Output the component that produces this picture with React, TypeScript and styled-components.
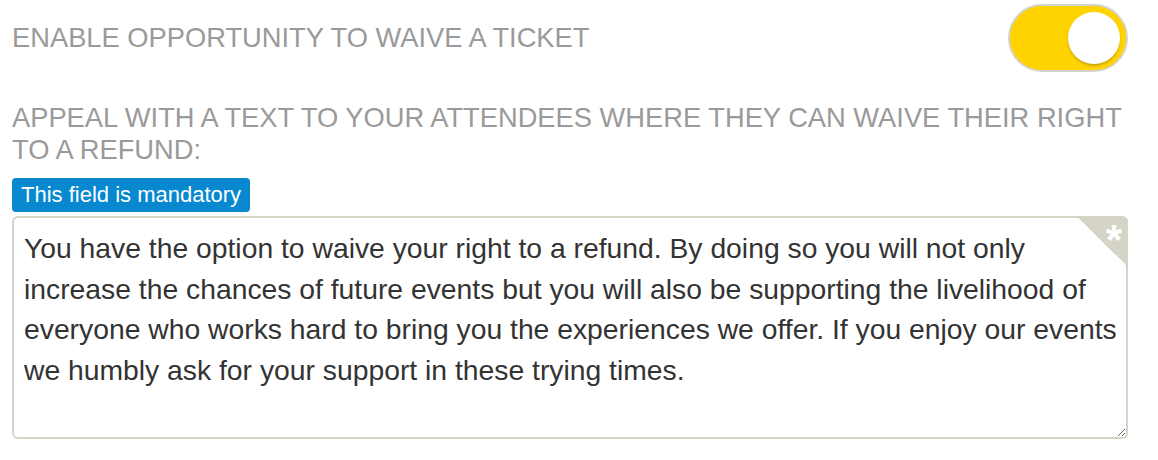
import React, { useState } from "react";
import styled, { createGlobalStyle } from "styled-components";

const GlobalStyle = createGlobalStyle`
  body {
    margin: 0;
    background: #ffffff;
    font-family: "Liberation Sans", Arial, sans-serif;
  }
`;

const Page = styled.div`
  width: 1116px;
  padding: 4px 0 0 12px;
`;

const SettingRow = styled.div`
  display: flex;
  align-items: center;
  justify-content: space-between;
  height: 68px;
`;

const Heading = styled.h3`
  margin: 0;
  font-size: 27.3px;
  font-weight: 400;
  line-height: 32px;
  color: #9a9a9a;
  text-transform: uppercase;
`;

const AppealHeading = styled(Heading)`
  margin-top: 30px;
`;

const Track = styled.button<{ $on: boolean }>`
  width: 120px;
  height: 68px;
  padding: 0;
  border: 2px solid #d5d4cb;
  border-radius: 34px;
  background: ${(p) => (p.$on ? "#ffd300" : "#eeeeee")};
  display: flex;
  align-items: center;
  justify-content: ${(p) => (p.$on ? "flex-end" : "flex-start")};
  cursor: pointer;
`;

const Knob = styled.span`
  width: 52px;
  height: 52px;
  margin: 0 6px;
  border-radius: 50%;
  background: #ffffff;
  box-shadow: 0 2px 2px rgba(120, 90, 0, 0.35);
`;

const Badge = styled.span`
  display: inline-block;
  margin-top: 12px;
  padding: 0 9px;
  height: 34px;
  line-height: 34px;
  border-radius: 4px;
  background: #0788cf;
  color: #ffffff;
  font-size: 22px;
`;

const FieldWrap = styled.div`
  position: relative;
  margin-top: 4px;
`;

const TextArea = styled.textarea`
  display: block;
  box-sizing: border-box;
  width: 1116px;
  height: 223px;
  padding: 10px 8px 10px 10px;
  border: 2px solid #d5d4c6;
  border-radius: 6px;
  font-family: "Liberation Sans", Arial, sans-serif;
  font-size: 28.3px;
  line-height: 40.5px;
  color: #333333;
  resize: vertical;
  outline: none;
`;

const RequiredCorner = styled.div`
  position: absolute;
  top: 0;
  right: 0;
  width: 51px;
  height: 51px;
  border-top-right-radius: 6px;
  background: linear-gradient(to top right, transparent 50%, #d5d4c6 50%);
  pointer-events: none;
`;

const Asterisk = styled.span`
  position: absolute;
  top: 3px;
  right: 6px;
  color: #ffffff;
  font-size: 42px;
  font-weight: 700;
  line-height: 42px;
`;

const appealText =
  "You have the option to waive your right to a refund. By doing so you will not only increase the chances of future events but you will also be supporting the livelihood of everyone who works hard to bring you the experiences we offer. If you enjoy our events we humbly ask for your support in these trying times.";

export default function App() {
  const [enabled, setEnabled] = useState(true);

  return (
    <Page>
      <GlobalStyle />
      <SettingRow>
        <Heading>Enable opportunity to waive a ticket</Heading>
        <Track $on={enabled} onClick={() => setEnabled(!enabled)} aria-label="toggle">
          <Knob />
        </Track>
      </SettingRow>
      <AppealHeading>
        Appeal with a text to your attendees where they can waive their right to a refund:
      </AppealHeading>
      <Badge>This field is mandatory</Badge>
      <FieldWrap>
        <TextArea defaultValue={appealText} />
        <RequiredCorner>
          <Asterisk>*</Asterisk>
        </RequiredCorner>
      </FieldWrap>
    </Page>
  );
}
